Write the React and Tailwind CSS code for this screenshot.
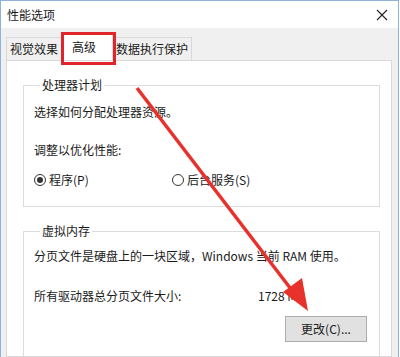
import React from "react";

const font = { fontFamily: '"Noto Sans CJK SC", "Noto Sans", "Liberation Sans", sans-serif' };

function Radio({ checked, label }) {
  return (
    <div className="flex items-center gap-[3px]">
      <span className="w-[12px] h-[12px] rounded-full border border-[#333] bg-white flex items-center justify-center">
        {checked && <span className="w-[6px] h-[6px] rounded-full bg-[#333]" />}
      </span>
      <span>{label}</span>
    </div>
  );
}

export default function App() {
  return (
    <div
      className="relative w-[400px] h-[357px] overflow-hidden bg-white text-[12px] leading-[16px] text-[#1a1a1a]"
      style={font}
    >
      <div className="w-[399px] h-[357px] flex flex-col border-t border-l border-r border-[#8fb2db]">
        {/* title bar */}
        <div className="h-[27px] shrink-0 bg-white flex items-center justify-between pl-[6px] pr-[6px]">
          <span>性能选项</span>
          <svg width="12" height="12" viewBox="0 0 12 12" className="mr-[4px]">
            <path d="M1 1 L11 11 M11 1 L1 11" stroke="#222" strokeWidth="1.1" />
          </svg>
        </div>
        {/* body */}
        <div className="flex-1 min-h-0 bg-[#f0f0f0] pl-[5px] pr-[6px] flex flex-col">
          <div className="shrink-0 flex items-end h-[32px] pt-[5px]">
            <div className="h-[23px] px-[3px] flex items-center border border-b-0 border-[#d9d9d9] bg-[#f0f0f0]">
              视觉效果
            </div>
            <div className="h-[27px] w-[51px] flex items-center pl-[9px] bg-white border border-b-0 border-[#d9d9d9]">
              高级
            </div>
            <div className="h-[23px] px-[3px] flex items-center border border-b-0 border-l-0 border-[#d9d9d9] bg-[#f0f0f0]">
              数据执行保护
            </div>
          </div>
          <div className="flex-1 min-h-0 overflow-hidden bg-white border border-[#d9d9d9] pt-[16px] pl-[16px] pr-[11px]">
            <fieldset className="border border-[#dcdcdc] pl-[10px] pr-[12px] pb-[18px]">
              <legend className="ml-[6px] px-[2px]">处理器计划</legend>
              <div className="mt-[11px]">选择如何分配处理器资源。</div>
              <div className="mt-[22px]">调整以优化性能:</div>
              <div className="mt-[14px] flex">
                <div className="w-[138px]">
                  <Radio checked label="程序(P)" />
                </div>
                <Radio label="后台服务(S)" />
              </div>
            </fieldset>
            <fieldset className="mt-[16px] border border-[#dcdcdc] pl-[10px] pr-[12px] pb-[20px]">
              <legend className="ml-[6px] px-[2px]">虚拟内存</legend>
              <div className="mt-[9px]">分页文件是硬盘上的一块区域，Windows 当前 RAM 使用。</div>
              <div className="mt-[24px] flex">
                <span className="w-[224px]">所有驱动器总分页文件大小:</span>
                <span>1728 MB</span>
              </div>
              <div className="mt-[12px] flex justify-end">
                <button className="w-[82px] h-[26px] bg-[#e1e1e1] border border-[#adadad] flex items-center justify-center">
                  更改(C)...
                </button>
              </div>
            </fieldset>
          </div>
        </div>
      </div>

      {/* red annotation box */}
      <div className="absolute left-[61px] top-[32px] w-[55px] h-[33px] border-[3px] border-[#e0262c]" />

      {/* red arrow */}
      <svg className="absolute left-0 top-0" width="400" height="357" viewBox="0 0 400 357">
        <line x1="137" y1="88" x2="297" y2="297" stroke="#e8312b" strokeWidth="3.5" />
        <polygon points="308,311 283,292 302,278" fill="#e8312b" />
      </svg>
    </div>
  );
}
